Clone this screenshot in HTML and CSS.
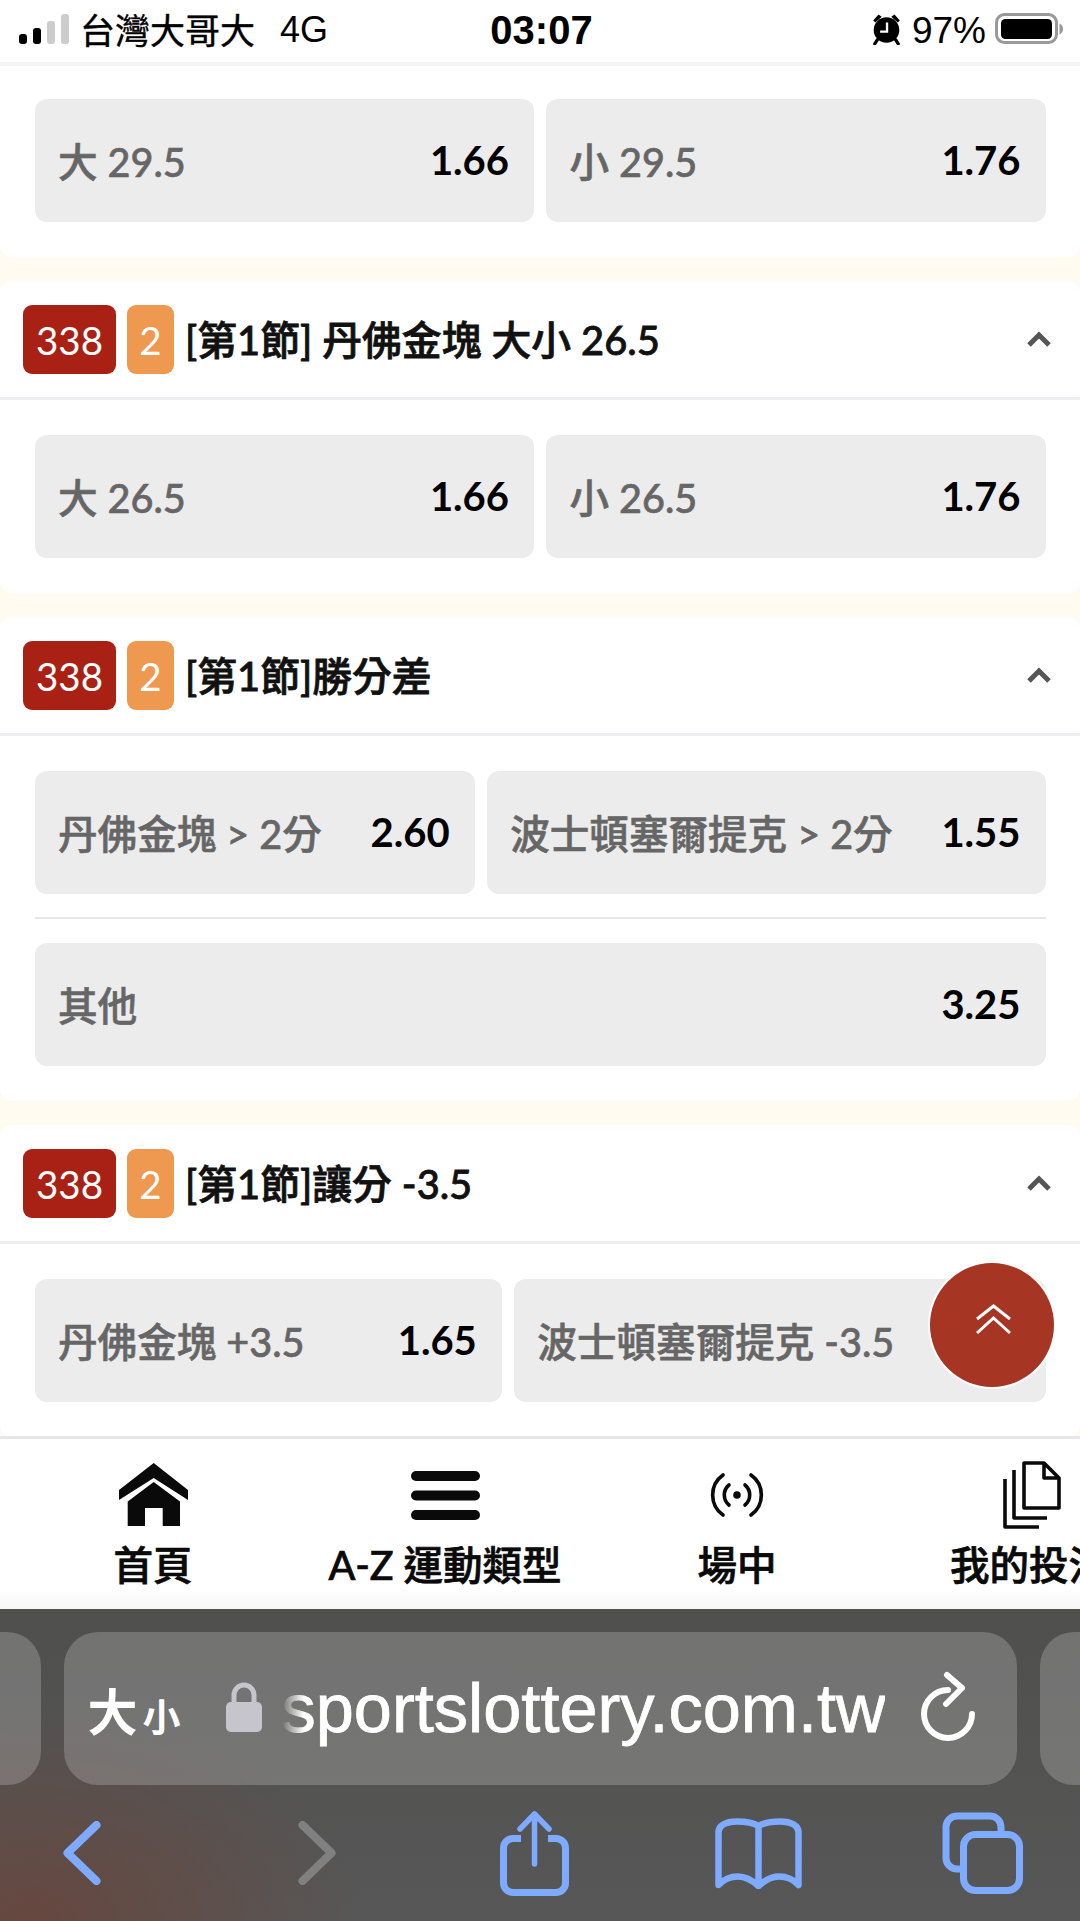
FILE: index.html
```html
<!DOCTYPE html>
<html lang="zh-Hant">

<head>
    <meta charset="UTF-8">
    <meta name="viewport" content="width=device-width, initial-scale=1.0">
    <title>大小</title>
    <link rel="stylesheet" href="styles.css">
</head>

<body>
    <div class="phone">
        <div class="status-bar">
            <div class="status-left">
                <div class="signal">
                    <span class="signal-bar bar-1"></span>
                    <span class="signal-bar bar-2"></span>
                    <span class="signal-bar bar-3"></span>
                    <span class="signal-bar bar-4"></span>
                </div>
                <span class="carrier">台灣大哥大</span>
                <span class="network">4G</span>
            </div>
            <div class="clock">03:07</div>
            <div class="status-right">
                <svg class="alarm" viewBox="0 0 27 30" width="29" height="32">
                    <circle cx="13.5" cy="16" r="12" fill="#000"/>
                    <path d="M1 7 L6 1.5 L9 3.5 L3 9 Z M26 7 L21 1.5 L18 3.5 L24 9 Z" fill="#000"/>
                    <path d="M5 25 L2.5 29 M22 25 L24.5 29" stroke="#000" stroke-width="3" stroke-linecap="round"/>
                    <path d="M14 9 V17.5 H7.5" fill="none" stroke="#fff" stroke-width="2.2"/>
                </svg>
                <span class="battery-text">97%</span>
                <svg class="battery" viewBox="0 0 69 32" width="69" height="32">
                    <rect x="1.5" y="1.5" width="60" height="28" rx="8" fill="none" stroke="#999" stroke-width="3"/>
                    <rect x="6" y="6" width="51" height="20" rx="4.5" fill="#000"/>
                    <path d="M64.5 10.5 C67 11.5 68 13.5 68 16 C68 18.5 67 20.5 64.5 21.5 Z" fill="#999"/>
                </svg>
            </div>
        </div>

        <div class="content">
            <div class="card first-card">
                <div class="card-body">
                    <div class="odds-row">
                        <div class="odds-btn"><span class="odds-label">大 29.5</span><span class="odds-value">1.66</span></div>
                        <div class="odds-btn"><span class="odds-label">小 29.5</span><span class="odds-value">1.76</span></div>
                    </div>
                </div>
            </div>

            <div class="card">
                <div class="card-head">
                    <span class="badge badge-red">338</span>
                    <span class="badge badge-orange">2</span>
                    <span class="card-title">[第1節] 丹佛金塊 大小 26.5</span>
                    <svg class="caret" viewBox="0 0 26 17" width="26" height="17"><path d="M3 14 L13 4 L23 14" fill="none" stroke="#555" stroke-width="5"/></svg>
                </div>
                <div class="card-body">
                    <div class="odds-row">
                        <div class="odds-btn"><span class="odds-label">大 26.5</span><span class="odds-value">1.66</span></div>
                        <div class="odds-btn"><span class="odds-label">小 26.5</span><span class="odds-value">1.76</span></div>
                    </div>
                </div>
            </div>

            <div class="card">
                <div class="card-head">
                    <span class="badge badge-red">338</span>
                    <span class="badge badge-orange">2</span>
                    <span class="card-title">[第1節]勝分差</span>
                    <svg class="caret" viewBox="0 0 26 17" width="26" height="17"><path d="M3 14 L13 4 L23 14" fill="none" stroke="#555" stroke-width="5"/></svg>
                </div>
                <div class="card-body">
                    <div class="odds-row">
                        <div class="odds-btn"><span class="odds-label">丹佛金塊 &gt; 2分</span><span class="odds-value">2.60</span></div>
                        <div class="odds-btn"><span class="odds-label">波士頓塞爾提克 &gt; 2分</span><span class="odds-value">1.55</span></div>
                    </div>
                    <div class="row-line"></div>
                    <div class="odds-row">
                        <div class="odds-btn"><span class="odds-label">其他</span><span class="odds-value">3.25</span></div>
                    </div>
                </div>
            </div>

            <div class="card">
                <div class="card-head">
                    <span class="badge badge-red">338</span>
                    <span class="badge badge-orange">2</span>
                    <span class="card-title">[第1節]讓分 -3.5</span>
                    <svg class="caret" viewBox="0 0 26 17" width="26" height="17"><path d="M3 14 L13 4 L23 14" fill="none" stroke="#555" stroke-width="5"/></svg>
                </div>
                <div class="card-body">
                    <div class="odds-row">
                        <div class="odds-btn"><span class="odds-label">丹佛金塊 +3.5</span><span class="odds-value">1.65</span></div>
                        <div class="odds-btn"><span class="odds-label">波士頓塞爾提克 -3.5</span><span class="odds-value odds-hidden"></span></div>
                    </div>
                </div>
            </div>

            <div class="to-top">
                <svg viewBox="0 0 37 31" width="37" height="31">
                    <path d="M2 15 L18.5 2 L35 15 M2 29 L18.5 14 L35 29" fill="none" stroke="#fff" stroke-width="3"/>
                </svg>
            </div>
        </div>

        <div class="nav">
            <div class="nav-item">
                <div class="nav-icon">
                    <svg viewBox="0 0 69 64" width="69" height="64">
                        <path d="M34.7 0 L69 27 V37 L34.7 15 L0 37 V27 Z" fill="#0a0a0a"/>
                        <path d="M34.7 19 L8.7 38.5 V63 H26 V45 H43.7 V63 H61 V38.5 Z" fill="#0a0a0a"/>
                    </svg>
                </div>
                <div class="nav-label">首頁</div>
            </div>
            <div class="nav-item">
                <div class="nav-icon">
                    <svg viewBox="0 0 69 49" width="69" height="49">
                        <rect x="0" y="0" width="69" height="10" rx="5" fill="#0a0a0a"/>
                        <rect x="0" y="19.5" width="69" height="10" rx="5" fill="#0a0a0a"/>
                        <rect x="0" y="39" width="69" height="10" rx="5" fill="#0a0a0a"/>
                    </svg>
                </div>
                <div class="nav-label">A-Z 運動類型</div>
            </div>
            <div class="nav-item">
                <div class="nav-icon">
                    <svg viewBox="0 0 54 44" width="54" height="44" fill="none" stroke="#0a0a0a" stroke-width="3.6" stroke-linecap="round">
                        <circle cx="27" cy="22" r="3.8" fill="#0a0a0a" stroke="none"/>
                        <path d="M19 12 A13 13 0 0 0 19 32 M35 12 A13 13 0 0 1 35 32"/>
                        <path d="M13 2 A24.5 24.5 0 0 0 13 42 M41 2 A24.5 24.5 0 0 1 41 42"/>
                    </svg>
                </div>
                <div class="nav-label">場中</div>
            </div>
            <div class="nav-item">
                <div class="nav-icon nav-icon-docs">
                    <svg viewBox="0 0 58 68" width="58" height="68" fill="none" stroke="#0a0a0a" stroke-width="3.6" stroke-linejoin="round">
                        <path d="M21 2 H41 L56 17 V47 H21 Z M41 2 V17 H56"/>
                        <path d="M11 9 V57 H44"/>
                        <path d="M2 18 V66 H36"/>
                    </svg>
                </div>
                <div class="nav-label">我的投注</div>
            </div>
        </div>

        <div class="toolbar">
            <div class="tabs">
                <div class="tab"></div>
                <div class="tab tab-current">
                    <span class="reader"><span class="reader-big">大</span><span class="reader-small">小</span></span>
                    <svg class="lock" viewBox="0 0 36 50" width="36" height="50">
                        <path d="M8 22 V13 A10 10 0 0 1 28 13 V22" fill="none" stroke="#c6c5cb" stroke-width="5"/>
                        <rect x="0" y="20" width="36" height="30" rx="5" fill="#c6c5cb"/>
                    </svg>
                    <span class="url">sportslottery.com.tw</span>
                    <svg class="reload" viewBox="0 0 60 70" width="60" height="70" fill="none" stroke="#fff" stroke-width="6" stroke-linecap="round" stroke-linejoin="round">
                        <path d="M30 19 A24 24 0 1 0 54 43"/>
                        <path d="M29 4 L44 17 L28 33"/>
                    </svg>
                </div>
                <div class="tab"></div>
            </div>
            <div class="tool-icons">
                <svg viewBox="0 0 38 64" width="38" height="64" fill="none" stroke="#7eabff" stroke-width="8" stroke-linecap="round" stroke-linejoin="round">
                    <path d="M33.5 4 L4.5 32 L33.5 60"/>
                </svg>
                <svg viewBox="0 0 38 64" width="38" height="64" fill="none" stroke="#808080" stroke-width="8" stroke-linecap="round" stroke-linejoin="round">
                    <path d="M4.5 4 L33.5 32 L4.5 60"/>
                </svg>
                <svg viewBox="0 0 69 86" width="69" height="86" fill="none" stroke="#7eabff" stroke-linecap="round" stroke-linejoin="round">
                    <path d="M21 28.5 H13 A9.5 9.5 0 0 0 3.5 38 V73 A9.5 9.5 0 0 0 13 82.5 H56 A9.5 9.5 0 0 0 65.5 73 V38 A9.5 9.5 0 0 0 56 28.5 H48" stroke-width="7" stroke-linecap="butt"/>
                    <path d="M34.5 54 V4 M20 19 L34.5 4 L49 19" stroke-width="5.5"/>
                </svg>
                <svg viewBox="0 0 87 71" width="87" height="71" fill="none" stroke="#7eabff" stroke-width="6.5" stroke-linecap="round" stroke-linejoin="round">
                    <path d="M43.5 8 C37 4 30 3.5 22 3.5 C10 3.5 3.5 8 3.5 14 V67 C9 61 16 58.5 23 58.5 C32 58.5 38 63 43.5 68 C49 63 55 58.5 64 58.5 C71 58.5 78 61 83.5 67 V14 C83.5 8 77 3.5 65 3.5 C57 3.5 50 4 43.5 8 Z M43.5 8 V68"/>
                </svg>
                <svg viewBox="0 0 81 82" width="81" height="82" fill="none" stroke="#7eabff" stroke-width="7">
                    <path d="M18 57 H15 A11 11 0 0 1 4 46 V15 A11 11 0 0 1 15 4 H48 A11 11 0 0 1 59 15 V20"/>
                    <rect x="21.5" y="22.5" width="56" height="56" rx="12"/>
                </svg>
            </div>
        </div>
    </div>
</body>

</html>
```

FILE: styles.css
```css
* {
    box-sizing: border-box;
}

body {
    margin: 0;
    font-family: Lato, "Noto Sans CJK TC", sans-serif;
    background: #fff;
}

.phone {
    width: 1080px;
    height: 1921px;
    display: flex;
    flex-direction: column;
    overflow: hidden;
}

/* status bar */
.status-bar {
    height: 66px;
    flex: none;
    display: grid;
    grid-template-columns: 1fr auto 1fr;
    align-items: center;
    padding: 0 16px 4px 19px;
    background: #fff;
    border-bottom: 4px solid #f2f2f7;
    color: #000;
    font-family: "Liberation Sans", "Noto Sans CJK TC", sans-serif;
}

.status-left,
.status-right {
    display: flex;
    align-items: center;
}

.status-right {
    justify-content: flex-end;
}

.signal {
    display: flex;
    align-items: flex-end;
    gap: 6px;
    height: 30px;
    margin-right: 11px;
}

.signal-bar {
    width: 8px;
    border-radius: 3px;
    background: #000;
}

.bar-1 {
    height: 10px;
}

.bar-2 {
    height: 16px;
}

.bar-3 {
    height: 23px;
    background: #ccc;
}

.bar-4 {
    height: 30px;
    background: #ccc;
}

.carrier {
    font-family: "Noto Sans CJK TC", sans-serif;
    font-size: 35px;
    line-height: 40px;
    -webkit-text-stroke: 0.4px #000;
}

.network {
    font-size: 36px;
    margin: 2px 0 0 25px;
}

.clock {
    font-size: 40px;
    font-weight: 700;
    margin-top: 3px;
}

.alarm {
    margin-right: 11px;
}

.battery-text {
    font-size: 37px;
    margin: 3px 9px 0 0;
}

/* cards */
.content {
    position: relative;
    flex: 1;
    min-height: 0;
    overflow: hidden;
    background: #fffbf0;
}

.card {
    background: #fff;
    border-radius: 12px;
    margin-bottom: 24px;
}

.first-card {
    border-radius: 0 0 12px 12px;
}

.card-head {
    height: 119px;
    display: flex;
    align-items: center;
    padding: 1px 28px 0 23px;
    border-bottom: 3px solid #eeeef2;
}

.badge {
    height: 69px;
    display: flex;
    align-items: center;
    justify-content: center;
    border-radius: 9px;
    color: #fff;
    font-size: 38.5px;
    padding-top: 1px;
    margin-right: 11px;
}

.badge-red {
    width: 93px;
    background: #a82114;
}

.badge-orange {
    width: 47px;
    background: #ee9850;
}

.card-title {
    flex: 1;
    color: #111;
    font-size: 39.8px;
    font-weight: 500;
    white-space: nowrap;
    padding-bottom: 5px;
    -webkit-text-stroke: 0.8px #111;
}

.caret {
    flex: none;
}

.card-body {
    padding: 35px 34.5px;
}

.first-card .card-body {
    padding-top: 33px;
}

.odds-row {
    display: flex;
    gap: 12px;
}

.odds-btn {
    flex: 1 1 auto;
    height: 123px;
    display: flex;
    align-items: center;
    justify-content: space-between;
    padding: 0 25px 3px 23.5px;
    background: #ececec;
    border-radius: 12px;
    white-space: nowrap;
}

.odds-label {
    color: #666;
    font-size: 39.6px;
    font-weight: 500;
    -webkit-text-stroke: 0.6px #666;
}

.odds-value {
    color: #000;
    font-size: 40px;
    font-weight: 700;
    margin-top: 2px;
}

.odds-hidden {
    min-width: 33px;
}

.row-line {
    height: 2px;
    background: #e6e6e6;
    margin: 23px 0 24px;
}

.to-top {
    position: absolute;
    top: 1197px;
    right: 26px;
    width: 124px;
    height: 124px;
    display: flex;
    align-items: center;
    justify-content: center;
    padding: 0 0 12px 3px;
    border-radius: 50%;
    background: #a63524;
    box-shadow: 0 0 0 2px #fff;
}

/* bottom nav */
.nav {
    flex: none;
    height: 173px;
    display: grid;
    grid-template-columns: repeat(4, 292px);
    padding: 21px 0 0 7px;
    background: linear-gradient(#fff 88%, #f6f6f6);
    border-top: 3px solid #e6e6e6;
    overflow: hidden;
}

.nav-item {
    display: flex;
    flex-direction: column;
    align-items: center;
}

.nav-icon {
    height: 70px;
    display: flex;
    align-items: center;
    margin-bottom: 10px;
}

.nav-icon-docs {
    margin-left: 5px;
}

.nav-label {
    color: #0a0a0a;
    font-size: 39.5px;
    font-weight: 500;
    line-height: 50px;
    white-space: nowrap;
    -webkit-text-stroke: 0.7px #0a0a0a;
}

/* safari toolbar */
.toolbar {
    flex: none;
    height: 312px;
    background:
        radial-gradient(ellipse 330px 210px at 30px 312px, #66473f, rgba(102, 71, 63, 0) 100%),
        linear-gradient(#4f4f4e, #575757);
}

.tabs {
    display: flex;
    justify-content: center;
    gap: 23px;
    padding-top: 23px;
    height: 176px;
}

.tab {
    flex: none;
    width: 953px;
    height: 153px;
    border-radius: 34px;
    background: rgba(255, 255, 255, 0.2);
}

.tab-current {
    display: flex;
    align-items: center;
    padding-left: 24px;
    color: #fff;
    font-family: "Liberation Sans", sans-serif;
}

.reader {
    display: flex;
    align-items: baseline;
    font-family: "Noto Sans CJK TC", sans-serif;
    font-weight: 700;
    width: 138px;
    flex: none;
}

.reader-big {
    font-size: 50px;
}

.reader-small {
    font-size: 38px;
    margin-left: 5px;
}

.lock {
    flex: none;
    margin: 0 20px 4px 0;
}

.url {
    font-size: 68.5px;
    line-height: 76px;
    -webkit-text-stroke: 0.8px #fff;
    -webkit-mask-image: linear-gradient(to right, transparent, #fff 22px);
    mask-image: linear-gradient(to right, transparent, #fff 22px);
}

.reload {
    flex: none;
    margin: 0 0 6px 33px;
}

.tool-icons {
    height: 136px;
    display: grid;
    grid-template-columns: 235px 202px 215px 227px auto;
    align-items: center;
    padding-left: 63px;
}
```
